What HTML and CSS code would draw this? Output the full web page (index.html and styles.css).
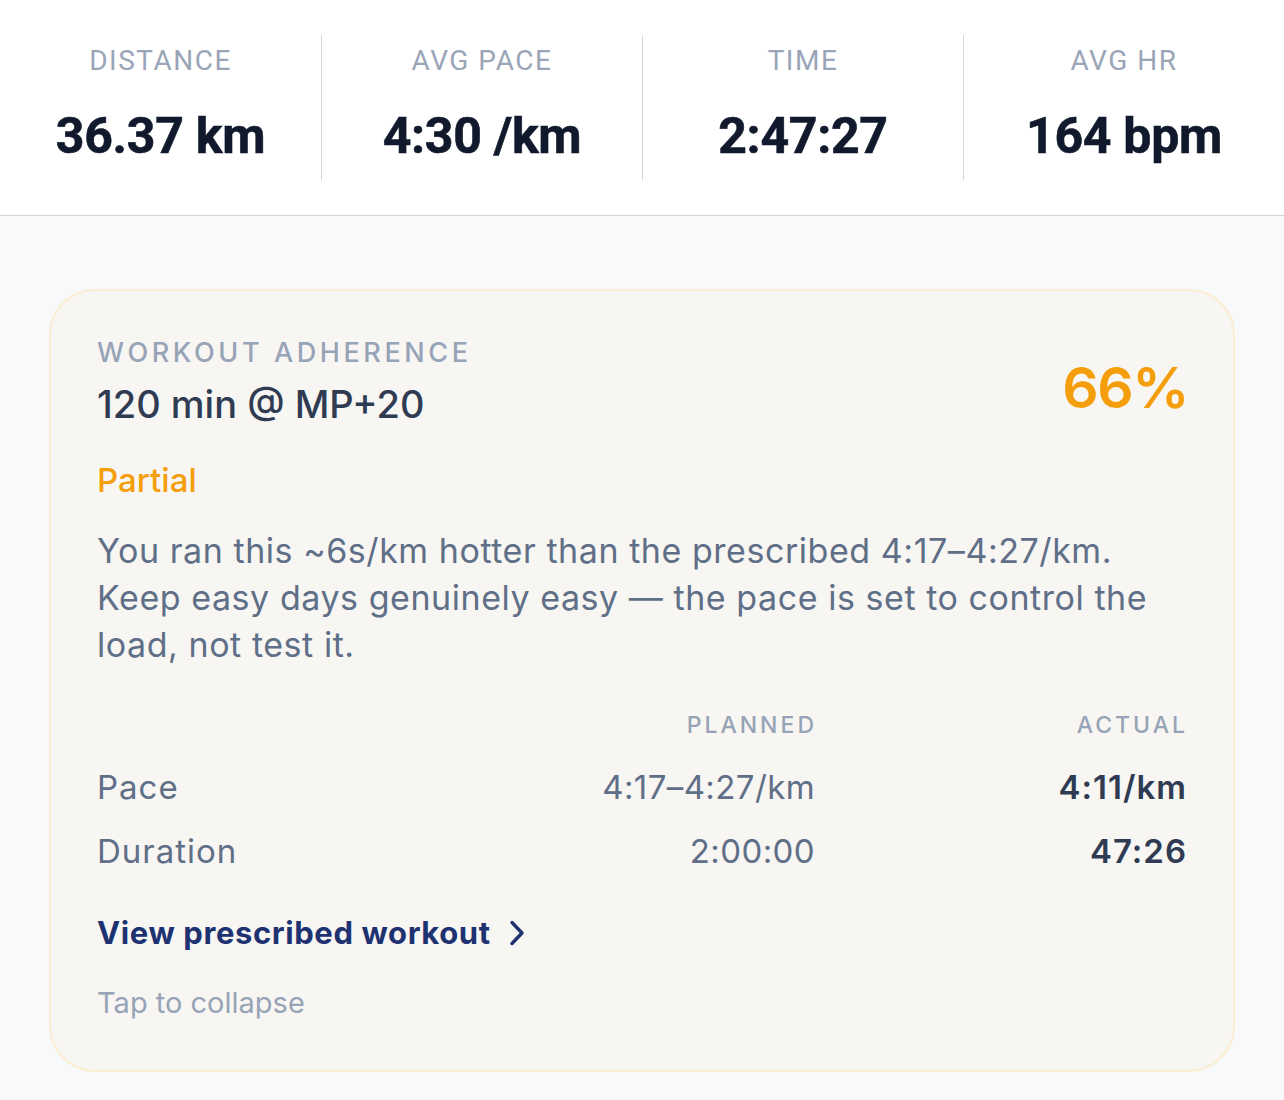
FILE: index.html
```html
<!DOCTYPE html>
<html>
<head>
<meta charset="utf-8">
<link rel="stylesheet" href="styles.css">
</head>
<body>
<div class="stats">
  <div class="stat"><div class="stat-label">DISTANCE</div><div class="stat-value">36.37 km</div></div>
  <div class="stat"><div class="stat-label">AVG PACE</div><div class="stat-value">4:30 /km</div></div>
  <div class="stat"><div class="stat-label">TIME</div><div class="stat-value">2:47:27</div></div>
  <div class="stat"><div class="stat-label">AVG HR</div><div class="stat-value">164 bpm</div></div>
</div>
<div class="main">
  <div class="card">
    <div class="card-head">
      <div>
        <div class="eyebrow">WORKOUT ADHERENCE</div>
        <div class="title">120 min @ MP+20</div>
      </div>
      <div class="score">66%</div>
    </div>
    <div class="status">Partial</div>
    <p class="desc">You ran this ~6s/km hotter than the prescribed 4:17–4:27/km. Keep easy days genuinely easy — the pace is set to control the load, not test it.</p>
    <div class="table">
      <div class="th"></div>
      <div class="th num">PLANNED</div>
      <div class="th num">ACTUAL</div>
      <div class="td label">Pace</div>
      <div class="td num planned">4:17–4:27/km</div>
      <div class="td num actual">4:11/km</div>
      <div class="td label">Duration</div>
      <div class="td num planned">2:00:00</div>
      <div class="td num actual">47:26</div>
    </div>
    <a class="link" href="#">View prescribed workout
      <svg class="chev" width="16" height="26" viewBox="0 0 16 26"><path d="M3 2.5 L13 13 L3 23.5" fill="none" stroke="#1e3272" stroke-width="3.4" stroke-linecap="round" stroke-linejoin="round"/></svg>
    </a>
    <div class="collapse">Tap to collapse</div>
  </div>
</div>
</body>
</html>
```
FILE: styles.css
```css
* { box-sizing: border-box; }
html, body { margin: 0; padding: 0; }
body {
  background: #f8f9fb;
  font-family: "Inter", "Noto Sans", sans-serif;
  width: 1284px;
  height: 1100px;
  overflow: hidden;
}
.stats {
  background: #ffffff;
  display: grid;
  grid-template-columns: repeat(4, 1fr);
  padding: 35px 0 35px;
  border-bottom: 1px solid #cfd4db;
}
.stat {
  text-align: center;
  border-left: 1px solid #d3d7dd;
  height: 145px;
  padding-top: 8px;
}
.stat:first-child { border-left: none; }
.stat-label {
  font-family: "Roboto", sans-serif;
  font-weight: 400;
  font-size: 28px;
  letter-spacing: 1.5px;
  color: #9aa5b7;
  line-height: 36px;
}
.stat-value {
  font-family: "Roboto", sans-serif;
  font-weight: 700;
  font-size: 50px;
  letter-spacing: -0.3px;
  color: #111a2c;
  line-height: 60px;
  margin-top: 27px;
  -webkit-text-stroke: 0.6px #111a2c;
}
.main {
  padding: 73px 49px 0;
}
.card {
  background: #f7f6f3;
  border: 2px solid #fbeed3;
  border-radius: 46px;
  padding: 47px 48px 44px 46px;
  height: 783px;
}
.card-head {
  display: flex;
  justify-content: space-between;
  align-items: flex-start;
}
.eyebrow {
  font-size: 27px;
  letter-spacing: 3.6px;
  font-weight: 500;
  color: #97a3b6;
  line-height: 30px;
}
.title {
  font-size: 38px;
  font-weight: 500;
  color: #2f3b52;
  line-height: 46px;
  margin-top: 13px;
}
.score {
  font-size: 57px;
  line-height: 60px;
  font-weight: 600;
  color: #f59e0b;
  letter-spacing: -1.5px;
  margin-top: 20px;
  margin-right: -3px;
}
.status {
  margin-top: 33px;
  font-size: 33px;
  font-weight: 500;
  color: #f59e0b;
  line-height: 40px;
}
.desc {
  margin: 27px 0 0;
  font-size: 34px;
  line-height: 47px;
  color: #5f6f87;
  letter-spacing: 0.55px;
}
.table {
  margin-top: 42px;
  display: grid;
  grid-template-columns: 1fr 300px 371px;
}
.th {
  font-size: 23px;
  letter-spacing: 3px;
  font-weight: 500;
  color: #97a3b6;
  line-height: 30px;
  margin-bottom: 15px;
  margin-right: -3px;
}
.num { text-align: right; }
.td {
  font-size: 33px;
  line-height: 64px;
  color: #5f6f87;
  letter-spacing: 1px;
}
.td.planned {
  letter-spacing: 0.4px;
  margin-right: -1px;
}
.td.actual {
  font-weight: 600;
  color: #2f3b52;
  margin-right: -2px;
}
.link {
  display: inline-flex;
  align-items: center;
  gap: 18px;
  margin-top: 28px;
  font-size: 31px;
  font-weight: 700;
  color: #1e3272;
  text-decoration: none;
  line-height: 44px;
  letter-spacing: 0.6px;
}
.chev { display: block; }
.collapse {
  margin-top: 28px;
  font-size: 29px;
  color: #97a3b6;
  line-height: 40px;
}
```
